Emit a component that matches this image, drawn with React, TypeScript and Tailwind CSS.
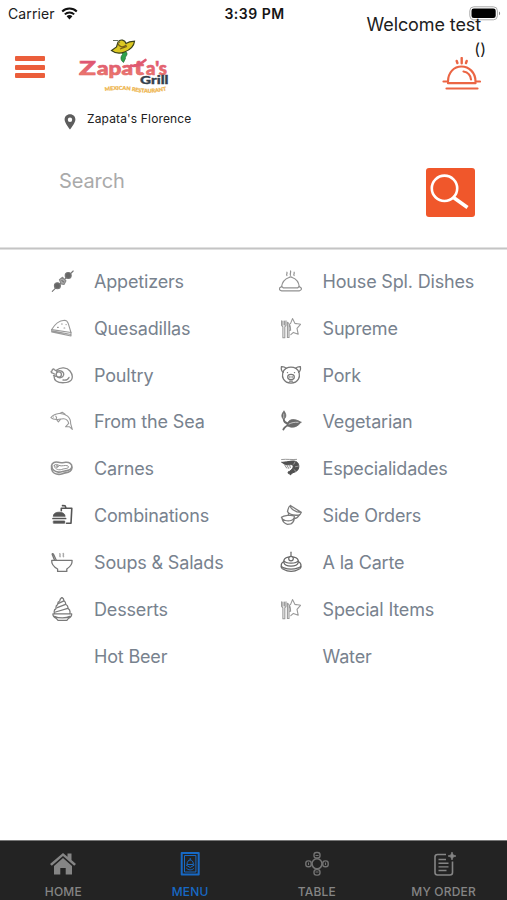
import type { ReactNode } from "react";

function Glyph({ children, tone = "#777", weight = 1.1 }: { children: ReactNode; tone?: string; weight?: number }) {
  return (
    <svg viewBox="0 0 24 24" className="h-6 w-6 shrink-0" fill="none" stroke={tone} strokeWidth={weight} strokeLinecap="round" strokeLinejoin="round">
      {children}
    </svg>
  );
}

const Kebab = () => (
  <Glyph tone="#777">
    <path d="M2.3 22.3 23.2 2" />
    <circle cx="7.4" cy="16.8" r="3" fill="#666" />
    <path d="M9.4 10.600l3.200-2.300 3.400 3.500-2 3.700-2.800-.6z" fill="#aaa" stroke="#888" />
    <path d="m11.8 11.5 2 1.5" />
    <circle cx="18.2" cy="6.5" r="3" fill="#666" />
  </Glyph>
);

const Quesadilla = () => (
  <Glyph tone="#999" weight={1.1}>
    <path d="M1.7 13.6C4.5 8.5 9.5 4.6 14.5 4.2c2.2.1 3.2 1.6 3.8 3.5L21 16.5z" />
    <path d="M1.7 13.6v2.3L21 20v-3.5M2 14.9l19 3.6" />
    <path d="M7.5 11.4h.8M11.5 8h.8M14 12h.8M16 8.6h.2" />
  </Glyph>
);

const Poultry = () => (
  <Glyph tone="#8a8a8a" weight={1.3}>
    <path d="M6.4 7.2C10.8 3.6 17 4.3 20 8c2.3 3 2.8 6.5 1.4 8.8-2.8 3.6-11.6 3.8-15.2 1.1-1.7-1.3-2.3-3-2-5" />
    <path d="M7 8.2c3.8-1.6 7.3.8 6.6 4-.7 2.8-4.7 3.4-6.8 1.2" />
    <circle cx="8.8" cy="11.5" r="2.6" />
    <path d="M5 11.3 2.6 10C.8 10 .6 8 2.2 7.8 1.8 6 3.7 5.3 4.4 6.8l2.8 1.6M13 17c2.6.4 5.2-.6 6-2.6M3.5 12.4l2.5 1" />
  </Glyph>
);

const Fish = () => (
  <Glyph tone="#999" weight={1.1}>
    <path d="M.9 8.6C5 3.8 12.7 3 17.6 7.2c2.2 2 3.2 4.7 3.1 7.600l1.600 5.600-3-2.700-3.800.1 3.200-3.400c-.5-2.600-2.400-4.500-5.100-4.700C8.700 9.500 5 12.600.9 8.600z" />
    <path d="m9.600 4.400 2.600-1.200 2.800 2.100M5.800 7.200c1 .8 1.100 1.800.4 2.900M7 11.100l1.400 1.700 2-2.400M3.400 8h.1" />
  </Glyph>
);

const Steak = () => (
  <Glyph tone="#8f8f8f" weight={1.6}>
    <path d="M1.6 9.5C2 6.4 5.3 5.4 8.2 6.3c2.6.8 4.6.3 7.3 0 3.8-.4 6.8 1.6 6.3 4.8-.5 3.2-4 3.4-7 3.9-2.5.4-3.6 1.4-6.6 1.1C4.5 15.700 1.4 13 1.600 9.500z" />
    <path d="M1.600 10v3.200c.6 3.400 4.200 5.200 7.400 5.200 2.500 0 3.900-1.200 6.300-1.500 3.300-.4 6.400-1.200 6.500-4.600V11" />
    <path d="M4.300 9.300c1.200-1.600 3.300-.8 4.600.1 2.800 1.400 6.200-.8 9 .5 1.800 1.600-.6 2.600-3 2.800-2.400.1-4 1.600-6.500 1-2-.4-4.700-2.300-4.100-4.400z" strokeWidth="1" />
    <circle cx="7" cy="10.500" r="1" strokeWidth="1" />
  </Glyph>
);

const Combo = () => (
  <Glyph tone="#555" weight={1.6}>
    <path d="M11.300 7.800V5.200h10.500L21 20.200h-4.500M16 5l-.9-2.200-2.600-.2" />
    <path d="M3.300 13c.2-2.600 2.400-3.800 5.800-3.800s5.700 1.200 6 3.800zM3.700 18h11v2.200h-11z" fill="#555" strokeWidth=".8" />
    <path d="M3 15.500h12.600" strokeWidth="1.700" />
  </Glyph>
);

const Soup = () => (
  <Glyph tone="#777" weight={1.3}>
    <path d="M1.700 10.400h20.400c.3 4.500-2.300 6.700-5.300 8.600v2.400H7.600V19c-3.700-2-6.200-4.400-5.900-8.600z" />
    <path d="M4.600 10.200 2.200 4.600c-.2-1 .7-1.300 1.200-.5l2.800 6" />
    <path d="M9.800 3.800c.8.800-.4 1.700.3 2.900M13.200 3.500c.8.800-.4 1.900.3 3.100" stroke="#aaa" strokeWidth="1.500" />
  </Glyph>
);

const Dessert = () => (
  <Glyph tone="#7a7a7a" weight={1.25}>
    <path d="M2.900 16.800h18.800c.2 2.300-1.200 3.600-3.300 4.600l-1.500 1.900H8l-1.700-1.900c-2.200-1-3.600-2.400-3.400-4.600zM4.500 19.400c4 2.100 11.800 2.100 15.400 0" />
    <path d="M4.500 16.500c-.8-2.700 0-4.200 1.600-4.900-.4-2 .2-3.400 1.600-4-.2-2 .8-3.200 2-3.600.1-1.700 1-2.800 2.200-3.600 1.500.8 2 2 2 3.300 1.500.9 1.900 2.200 1.700 3.600 1.900 1 2.700 2.300 2.300 4.100 1.800 1.100 2.600 2.800 1.900 5.100" />
    <path d="m8.500 6.400 5.400-2.500M7.200 10.600l8.400-3.200M5.500 15l12.300-3.600" />
  </Glyph>
);

const Platter = () => (
  <Glyph tone="#919191" weight={1.2}>
    <path d="M2.600 17.500c.6-4 3.500-7.600 7.400-9 1-.8 2.300-.8 3.200 0 3.800 1.400 6.600 5 7 9" />
    <path d="M2.600 17.500.6 19c-.7 1.300.4 2.500 2.200 2.800h17.400c1.800-.3 2.600-1.500 2-2.800l-2-1.500-1.400 1.300H4.200z" />
    <path d="M7.900 6.500c-1-1.300.8-2 0-3.300M11.500 6.300c-1-1.700.8-2.700 0-4.300M15.100 6.500c-1-1.300.8-2 0-3.300" />
  </Glyph>
);

const StarFork = () => (
  <Glyph tone="#999" weight={1.1}>
    <path d="m11.500 7.600 2-5 2.500 4.800c2 .4 3.700.4 5.500.9l-3.500 4 1.200 5.900-4.800-1.800-2.600 2.300" />
    <path d="M2.600 4.800v4.500l1.300 1.600v10.800h1.900V10.800L7 9.300V4.800M4 5v4M5.600 5v4" />
    <path d="M8.400 21.500V6.200c2.200 1 3.200 3.500 3.200 8H10v7.300zM10 8v6" />
  </Glyph>
);

const Pig = () => (
  <Glyph tone="#777" weight={1.25}>
    <path d="M7 5.400C10 3.800 14 3.800 16.900 5.400c3.500 2.200 4.500 7.200 2.500 10.700-3 5.200-11.900 5.200-14.900 0-2-3.500-1-8.500 2.500-10.700z" />
    <path d="M7.200 5.300c-1.700-1.500-3.200-1.700-4.800-1.600-.4 2.500.2 4.600 1.800 5.700M16.700 5.300c1.700-1.500 3.200-1.700 4.700-1.600.4 2.500-.2 4.600-1.800 5.700" />
    <ellipse cx="12" cy="14" rx="3.300" ry="2.600" />
    <path d="M10.900 13.600v.7M13.100 13.600v.7M8.400 9.600h.2M15.400 9.600h.2M10.500 18h3" />
  </Glyph>
);

const Leaves = () => (
  <Glyph tone="#6b6b6b" weight={0.8}>
    <path d="M5 2.200C2.600 4.400 1.700 7.900 4.700 10.400 7.300 8.700 7.700 5 5 2.200z" fill="#6b6b6b" />
    <path d="M21.900 13.200C16 9.200 9.300 9.300 7.800 16.200c4.600 3.800 11 2 14.100-3z" fill="#6b6b6b" />
    <path d="M4.700 10.300c.2 2.300 1.500 3.500 3.800 4M4.300 20.500c1.600-3.300 4.700-4.600 8-4.900" strokeWidth="1.800" />
    <path d="M10 15c2.500-1.400 5.400-1.900 9.200-1.700M4.800 5v4" stroke="#ddd" />
  </Glyph>
);

const Shrimp = () => (
  <Glyph tone="#505050" weight={1}>
    <path d="M2.600 3.500c5.500-.6 10 .4 15-.1" stroke="#999" />
    <path d="M3 6.400c2 2.100 5.100 2.900 8.500 2.200 2.400-.3 3.100 1.100 2.500 2.800-.7 2-2.700 3.800-5 4.700l.4 1.500 1.500-.3.200 1.700 2.800-2.300c4.300-1 6.200-3.600 5.900-7-.4-4-3.900-5.100-7.400-4.600C9.300 5.500 6 6.300 3 6.400z" fill="#505050" />
    <path d="m5.500 8.600 2.200 3.500M8.100 9.400l1.600 3M10.700 9.200l.6 2.400" stroke="#888" />
    <path d="m14.800 8.200 1.200-2.300M16.400 10.700l2.700-.5M15 13.600l1.800 1.700" stroke="#bbb" strokeWidth=".7" />
  </Glyph>
);

const Bowls = () => (
  <Glyph tone="#7c7c7c" weight={1.3}>
    <path d="M8.500 8.700c.5-3 1.600-5.500 2.900-6.200l10.900 6.900c-.5 1.400-1.300 2.400-2.300 2.600C15.500 12.600 10.800 12 8.500 8.700zM11.400 2.500c-.6 2.700 4.800 7 10.800 6.900" />
    <path d="M9.500 10.200v2M20.300 12c-1.300 2.400-3.300 3.600-5.300 3.700" />
    <path d="M2.400 14.200c2.400-1.600 9.700-2.600 12.800-1.300.6 2.300-1 3.900-3.200 4.600-3.300 1.100-8.800 0-9.600-3.300zM3.200 16.200c.7 3 3 4.500 5.300 5.200l3.400-.5c2.200-1.400 3.400-3.300 3.300-6" />
  </Glyph>
);

const Cake = () => (
  <Glyph tone="#6a6a6a" weight={1.2}>
    <path d="M4.800 10.500C5.500 8 8.500 6.800 12 6.800s6.600 1.200 7.300 3.700v2c-.7 2.400-3.700 3.600-7.300 3.600s-6.500-1.200-7.200-3.600zM4.800 10.500c1 2 3.600 2.700 7.200 2.700s6.300-.7 7.300-2.700" />
    <path d="M4.500 11.700c-4 2.700-2 5.500.5 6.200 3.900 1.400 10.300 1.400 14.200 0 2.600-.7 4.400-3.500.5-6.200M2.200 15.500c-.5 2 .7 3.300 2.700 3.900 4 2.500 10.500 2.500 14.400 0 2-.6 3.200-1.900 2.700-3.900" />
    <circle cx="12" cy="8.600" r="2.300" fill="#fff" />
    <path d="M12 6.300V2.200" />
  </Glyph>
);

const left = [
  { name: "Appetizers", icon: <Kebab /> },
  { name: "Quesadillas", icon: <Quesadilla /> },
  { name: "Poultry", icon: <Poultry /> },
  { name: "From the Sea", icon: <Fish /> },
  { name: "Carnes", icon: <Steak /> },
  { name: "Combinations", icon: <Combo /> },
  { name: "Soups & Salads", icon: <Soup /> },
  { name: "Desserts", icon: <Dessert /> },
  { name: "Hot Beer", icon: null },
];

const right = [
  { name: "House Spl. Dishes", icon: <Platter /> },
  { name: "Supreme", icon: <StarFork /> },
  { name: "Pork", icon: <Pig /> },
  { name: "Vegetarian", icon: <Leaves /> },
  { name: "Especialidades", icon: <Shrimp /> },
  { name: "Side Orders", icon: <Bowls /> },
  { name: "A la Carte", icon: <Cake /> },
  { name: "Special Items", icon: <StarFork /> },
  { name: "Water", icon: null },
];

function Column({ items }: { items: { name: string; icon: ReactNode }[] }) {
  return (
    <ul>
      {items.map((item) => (
        <li key={item.name} className="flex h-[46.85px] items-center">
          <span className="w-11 shrink-0">{item.icon}</span>
          <span className="pt-px text-[18px] tracking-[-0.17px] whitespace-nowrap text-[#78828e]">{item.name}</span>
        </li>
      ))}
    </ul>
  );
}

function Logo() {
  return (
    <svg viewBox="76 36 96 60" className="h-[60px] w-24">
      <defs>
        <linearGradient id="wordmark" x1="0" y1="0" x2="0" y2="1">
          <stop offset="0.2" stopColor="#dd5276" />
          <stop offset="1" stopColor="#f08468" />
        </linearGradient>
        <path id="ribbon" d="M105 91q17-2.500 31 .5t32-1.500" />
      </defs>
      <path d="M121.500 51c4 0 6 1 5.500 3.500-.5 2-2 2-1.500 4l-2 4c-3.500-2.500-3-6-1-8z" fill="#2fa24b" stroke="#245c2c" strokeWidth=".6" />
      <path d="M111.500 50.500c4 3 8 3.500 13 1.500s9.500-5.500 10-10.800l-5 .7-3.500 1.600c-1-3.500-5.500-5-8-1.500l-1.500 5z" fill="#dcc823" stroke="#39401c" strokeWidth="1.200" />
      <path d="M118 43.500c1 3 4 5 8.500 1.500M120 49l7-2.500" fill="none" stroke="#765f16" strokeWidth="1.200" />
      <path d="M113 40.500h5l2 2.500" fill="none" stroke="#667060" strokeWidth="1" />
      <g fill="url(#wordmark)" stroke="#e3666d" strokeWidth=".6" fontSize="18" className="font-['Lato'] font-black">
        <text x="79" y="75" textLength="17" lengthAdjust="spacingAndGlyphs">Z</text>
        <text x="97" y="75" textLength="36" lengthAdjust="spacingAndGlyphs">apa</text>
        <text x="146" y="75" textLength="21" lengthAdjust="spacingAndGlyphs">a's</text>
        <text x="134" y="75" fontSize="21" textLength="10" lengthAdjust="spacingAndGlyphs">t</text>
      </g>
      <path d="M131 65.500c5 1.500 9-1 14.500-5.500" fill="none" stroke="#df5870" strokeWidth="2.600" strokeLinecap="round" />
      <text x="140" y="83.500" fontSize="10.500" textLength="28.500" lengthAdjust="spacingAndGlyphs" fill="#35404c" stroke="#35404c" strokeWidth=".3" className="font-['Lato'] font-black">Grill</text>
      <text fontSize="5.200" fill="#edb044" stroke="#f0bd62" strokeWidth=".3" className="font-['Lato'] font-black">
        <textPath href="#ribbon" textLength="62" lengthAdjust="spacingAndGlyphs">MEXICAN RESTAURANT</textPath>
      </text>
    </svg>
  );
}

function Tab({ label, active, children }: { label: string; active?: boolean; children: ReactNode }) {
  return (
    <div className={active ? "flex flex-1 flex-col items-center text-[#1769c5]" : "flex flex-1 flex-col items-center text-[#858585]"}>
      <svg viewBox="0 0 28 26" className="mt-2.5 h-[26px] w-7" fill="none" stroke="currentColor" strokeWidth="1.400" strokeLinejoin="round">
        {children}
      </svg>
      <span className="mt-[7px] text-[12px] leading-4 font-medium tracking-[0.2px]">{label}</span>
    </div>
  );
}

export default function App() {
  return (
    <div className="flex h-[900px] w-[507px] flex-col overflow-hidden bg-white font-['Inter',sans-serif] text-[#202020]">
      <header className="h-[247px] shrink-0">
        <div className="grid h-[27px] grid-cols-3 items-center pr-[6px] pl-2 text-[14px]">
          <div className="flex items-center gap-1.5">
            <span className="tracking-[0.1px]">Carrier</span>
            <svg viewBox="0 0 17 13" className="h-[13px] w-[17px]">
              <path d="M1.200 4.500c4-4 10.600-4 14.600 0M3.800 7.400c2.700-2.600 6.700-2.600 9.400 0" fill="none" stroke="#111" strokeWidth="2" />
              <path d="m5.600 9.300 2.900 3.100 2.900-3.100c-1.500-1.600-4.300-1.600-5.800 0z" fill="#111" />
            </svg>
          </div>
          <span className="text-center font-semibold tracking-[0.5px] whitespace-nowrap text-[#151515]">3:39 PM</span>
          <svg viewBox="0 0 32 15" className="h-[15px] w-8 justify-self-end">
            <rect x=".8" y=".8" width="27.600" height="13" rx="4" fill="none" stroke="#aaa" />
            <rect x="2.500" y="2.500" width="24.200" height="9.600" rx="2.300" fill="#000" />
            <path d="M30 5.500c1.500.8 1.500 2.900 0 3.700z" fill="#888" />
          </svg>
        </div>
        <div className="-mt-[15px] flex h-6 items-center justify-end pr-[26px]">
          <span className="relative text-[18px] tracking-[-0.1px]">Welcome test</span>
        </div>
        <div className="flex h-[60px] pl-[15px]">
          <div className="mt-5 flex h-[22px] w-[30px] flex-col justify-between">
            <i className="h-[5px] rounded-[1px] bg-[#eb5e3b]" />
            <i className="h-[5px] rounded-[1px] bg-[#eb5e3b]" />
            <i className="h-[5px] rounded-[1px] bg-[#eb5e3b]" />
          </div>
          <div className="ml-[31px]"><Logo /></div>
          <div className="mr-[21px] ml-auto flex flex-col items-end">
            <span className="mt-[5px] text-[16px] leading-4">()</span>
            <svg viewBox="0 0 40 36" className="mr-[5px] h-9 w-10" fill="none" stroke="#eb6544" strokeWidth="2.200" strokeLinecap="round">
              <path d="M7 24.500C7 15.500 13 9.500 20.500 9.500S34.500 15.500 34.500 24.500M2.500 24.500h4.500M34.500 24.500H39M7 26.200h27.500M5.500 31.500h31" />
              <path d="M22.500 14.500c4.500.8 7 3.600 7.500 8" />
              <path d="M20.700 1v5.200M15.700 4l.7 2M25.700 4l-.7 2" strokeWidth="2.400" />
            </svg>
          </div>
        </div>
        <div className="mt-[13px] flex h-5 items-start pl-16">
          <svg viewBox="0 0 12 16" className="mt-[5px] h-4 w-3">
            <path fillRule="evenodd" d="M6 .3C2.700.300.600 2.600.600 5.500.600 9 6 15.600 6 15.600S11.400 9 11.400 5.500C11.400 2.600 9.300.300 6 .300zM6 3.500a2.200 2.200 0 1 1 0 4.400 2.200 2.200 0 0 1 0-4.400z" fill="#5d5d5d" />
          </svg>
          <span className="ml-[11px] text-[12px] leading-5 tracking-[0.15px]">Zapata's Florence</span>
        </div>
        <div className="mt-[39px] flex h-[49px] justify-between pr-8 pl-[59px]">
          <span className="text-[20px] leading-[27px] tracking-[-0.1px] text-[#aaa]">Search</span>
          <button className="h-[49px] w-[49px] rounded-[3px] bg-[#f0572b]">
            <svg viewBox="0 0 49 49" className="h-full w-full" fill="none" stroke="#fff" strokeWidth="3">
              <circle cx="18.500" cy="20.300" r="12.700" strokeWidth="2.600" />
              <path d="M27.500 29.500 41.500 39.500" strokeWidth="3.600" />
            </svg>
          </button>
        </div>
      </header>
      <div className="h-[3px] shrink-0 border-y border-[#e0e0e0] bg-[#c4c4c4]" />
      <main className="flex grow pt-[7.500px] pl-[50px]">
        <div className="w-[228.500px]"><Column items={left} /></div>
        <Column items={right} />
      </main>
      <nav className="flex h-[60px] shrink-0 border-t border-[#777] bg-[#232323]">
        <Tab label="HOME">
          <path d="M1 13 14 2l4.500 3.800V2.500h4V9l4.500 4-1.800 1.800L14 5 2.800 14.800z" fill="currentColor" stroke="none" />
          <path d="m14 7 9 8v8.500h-6.300V17h-5.400v6.500H5V15z" fill="currentColor" stroke="none" />
        </Tab>
        <Tab label="MENU" active>
          <rect x="5.700" y="2" width="17" height="21.500" strokeWidth="2" />
          <path d="M8.500 4.500h11.400v16.500H8.500zM14.200 7v2M11 13.500c0-6 6.400-6 6.400 0zM10 14l4.200 2.500 4.200-2.500M10.300 17c2 2.500 5.800 2.500 7.800 0" strokeWidth="1" />
        </Tab>
        <Tab label="TABLE">
          <g stroke="#737373">
            <circle cx="14" cy="12.800" r="5" strokeWidth="1.600" />
            <rect x="11" y="1.500" width="6" height="5.500" rx="2.300" />
            <rect x="11" y="18.600" width="6" height="5.500" rx="2.300" />
            <rect x="2.800" y="9.900" width="5.400" height="5.800" rx="2.300" />
            <rect x="19.800" y="9.900" width="5.400" height="5.800" rx="2.300" />
            <path d="M12.500 4.500h3M12.500 21h3M5.500 11.500v2.600M22.500 11.500v2.600" strokeWidth="1" />
          </g>
        </Tab>
        <Tab label="MY ORDER">
          <g stroke="#858585">
            <path d="M16 3.500H7.500c-1.500 0-2.500 1-2.500 2.500v15.500c0 1.500 1 2.500 2.500 2.500H20c1.500 0 2.500-1 2.500-2.500V10.500" strokeWidth="1.600" />
            <path d="M8.500 8.500H16M8.500 12.200h10M8.500 15.900h10M8.500 19.500h8" />
            <path d="m22 1 1.100 2.900L26 5l-2.900 1.100L22 9l-1.100-2.900L18 5l2.900-1.100z" fill="currentColor" strokeWidth=".7" />
          </g>
        </Tab>
      </nav>
    </div>
  );
}
